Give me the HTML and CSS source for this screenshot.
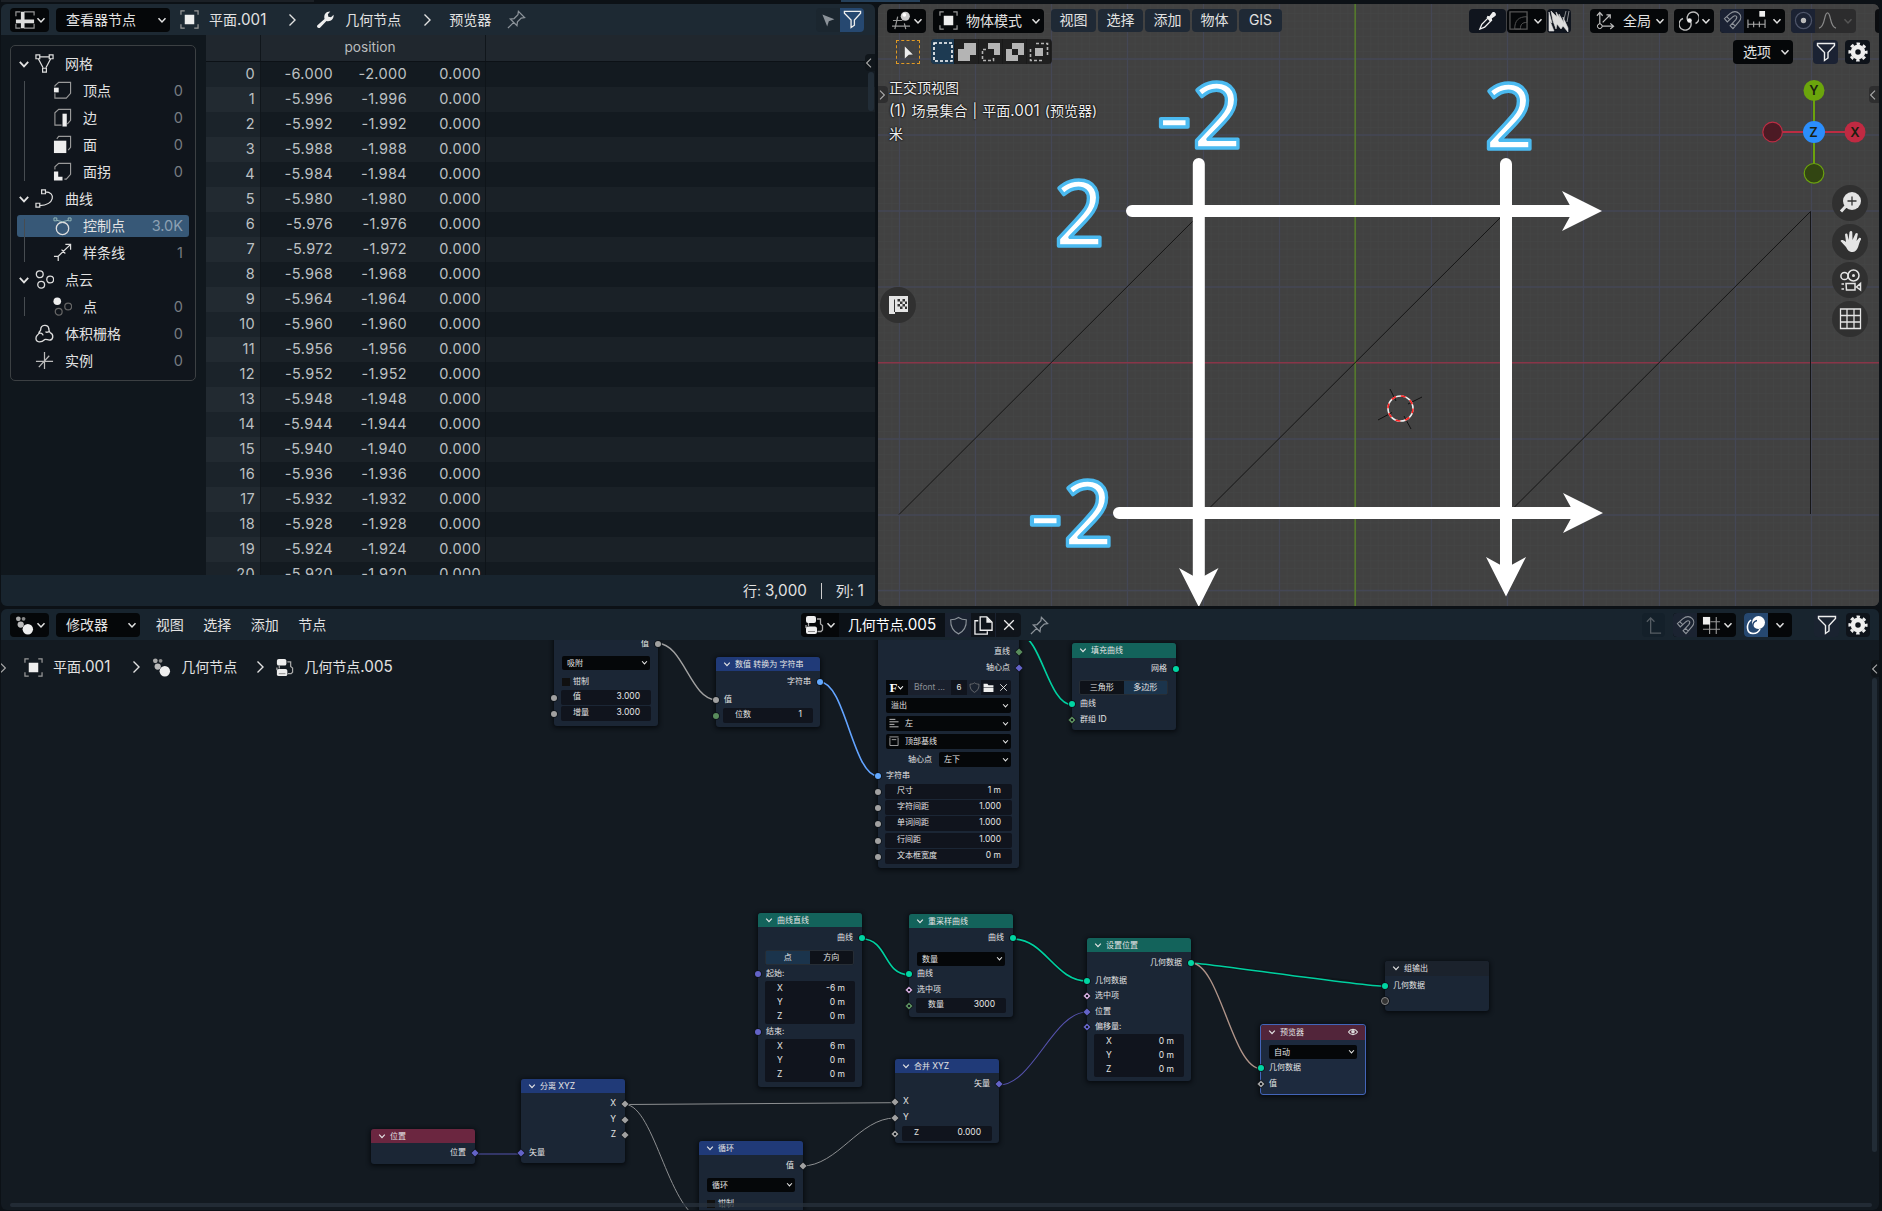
FILE: index.html
```html
<!DOCTYPE html>
<html lang="zh-CN">
<head>
<meta charset="utf-8">
<title>几何节点.005</title>
<link rel="stylesheet" href="styles.css">
</head>
<body>
<svg class="defs" aria-hidden="true">
  <symbol id="chev" viewBox="0 0 10 10"><path d="M1.5 3.2 5 7 8.5 3.2" fill="none" stroke="currentColor" stroke-width="1.5"/></symbol>
  <symbol id="right" viewBox="0 0 10 14"><path d="M2.5 1.5 8 7 2.5 12.5" fill="none" stroke="currentColor" stroke-width="1.4"/></symbol>
  <symbol id="object" viewBox="0 0 20 20"><path d="M1 5V1H5M15 1H19V5M19 15V19H15M5 19H1V15" fill="none" stroke="#999" stroke-width="1.3"/><rect x="5" y="5" width="10" height="10" fill="#eee"/></symbol>
  <symbol id="sheet" viewBox="0 0 22 20"><path d="M1 6V1H6M10 1H21V5M21 14V19H10M6 19H1V14" fill="none" stroke="#999" stroke-width="1.3"/><path d="M1 11.500H21M8.500 1V19" stroke="#ddd" stroke-width="4"/></symbol>
  <symbol id="wrench" viewBox="0 0 20 20"><path d="M1.500 16 9 9.500C8 5 10 1.500 15 1.500L12.500 4.500 13 7 15.800 7.500 18.500 5C19 10 15 12.500 11 11.500L4.500 18.500C3 20 0 18 1.500 16Z" fill="#eee"/></symbol>
  <symbol id="pin" viewBox="0 0 20 20"><path d="M1 19 7 13M3.500 9.500 10.500 16.500 11 12.500 15 8.500 18.500 8 12 1.500 11.500 5 7.500 9Z" fill="none" stroke="currentColor" stroke-width="1.3"/></symbol>
  <symbol id="cursor" viewBox="0 0 20 20"><path d="M3 3 18 9 11 11.500 9 18Z" fill="currentColor"/></symbol>
  <symbol id="tweak" viewBox="0 0 20 20"><path d="M6 3 16 13 11 13.500 6 18Z" fill="#eee"/></symbol>
  <symbol id="funnel" viewBox="0 0 20 20"><path d="M1.500 1.500H18.500V3.500L12 10.500V16L8.500 18.500V10.500L1.500 3.500Z" fill="none" stroke="#eee" stroke-width="1.4"/></symbol>
  <symbol id="gear" viewBox="0 0 20 20"><circle cx="10" cy="10" r="5" fill="none" stroke="#eee" stroke-width="4.500"/><circle cx="10" cy="10" r="8.300" fill="none" stroke="#eee" stroke-width="2.600" stroke-dasharray="3.400 3.120" stroke-dashoffset="1.700"/></symbol>
  <symbol id="mesh" viewBox="0 0 20 20"><g fill="none" stroke="#ddd" stroke-width="1.300"><path d="M5 3H15M3.500 5 8.500 14.500M16.500 5 11.500 14.500"/><path d="M1 1H5V5H1ZM15 1H19V5H15ZM8 15H12V19H8Z"/></g></symbol>
  <symbol id="vert" viewBox="0 0 20 20"><path d="M2 6V5L6 1.500H18.500V13L14 18H2V13" fill="none" stroke="#999" stroke-width="1.200"/><rect x="1" y="7" width="5" height="5" fill="#eee"/></symbol>
  <symbol id="edge" viewBox="0 0 20 20"><path d="M9 18H2V5L6 1.500H18.500V13L15 17" fill="none" stroke="#999" stroke-width="1.200"/><rect x="10" y="6" width="4.500" height="13.500" fill="#eee"/></symbol>
  <symbol id="face" viewBox="0 0 20 20"><path d="M4 4 6 1.500H18.500V13L16 16" fill="none" stroke="#999" stroke-width="1.200"/><rect x="1" y="6" width="13" height="13" fill="#eee"/></symbol>
  <symbol id="corner" viewBox="0 0 20 20"><path d="M2 8V5L6 1.500H18.500V13L14 18H12" fill="none" stroke="#999" stroke-width="1.200"/><path d="M1 10H5.500V15.500H10V19.500H1Z" fill="#eee"/></symbol>
  <symbol id="curve" viewBox="0 0 20 20"><g fill="none" stroke="#ddd" stroke-width="1.300"><path d="M7 1H11V5H7ZM1 15H5V19H1ZM11 3C22 3 21 17 5 17.500"/></g></symbol>
  <symbol id="ctrl" viewBox="0 0 20 20"><g fill="none" stroke="#ddd"><circle cx="10" cy="12" r="6.500" stroke-width="1.400"/><path d="M4 3.500 10 5 16 3.500" stroke="#9bb" /><path d="M1 1H4V4H1ZM16 1H19V4H16Z" stroke="#9bb"/></g></symbol>
  <symbol id="spline" viewBox="0 0 20 20"><path d="M1 14H5.500V19M5.500 14 18 2M13 1.500H18.500V7M9 7 13 11" fill="none" stroke="#ddd" stroke-width="1.300"/></symbol>
  <symbol id="cloud3" viewBox="0 0 20 20"><g fill="none" stroke="#ddd" stroke-width="1.400"><circle cx="5" cy="4.500" r="3.600"/><circle cx="16" cy="10" r="3.600"/><circle cx="6.500" cy="15.500" r="3.600"/></g></symbol>
  <symbol id="pt3" viewBox="0 0 20 20"><circle cx="4.500" cy="4.500" r="4" fill="#eee"/><g fill="none" stroke="#666" stroke-width="1.300"><circle cx="16" cy="10" r="3.600"/><circle cx="6" cy="15.500" r="3.600"/></g></symbol>
  <symbol id="volume" viewBox="0 0 20 20"><path d="M4 10C4 8 6 7.500 6 6 6 0 14 0 14.500 5 15 7 14.500 8 16 9 20 11 19.500 17 15 17 13 17 12 15.500 10 16.500 7 19.500 1 20 1 15 1 12 3 12 4 10ZM4 10C6 9 8 10 8.500 12M14.500 8C13 9 12 9 11 8" fill="none" stroke="#ddd" stroke-width="1.400"/></symbol>
  <symbol id="axes" viewBox="0 0 20 20"><path d="M10 1V19M1 11H19M4 17 15 5" fill="none" stroke="#bbb" stroke-width="1.300"/></symbol>
  <symbol id="nodes" viewBox="0 0 20 20"><circle cx="3.500" cy="3" r="2.500" fill="#aaa"/><circle cx="9" cy="3" r="2" fill="#888"/><circle cx="6" cy="9" r="3.300" fill="#bbb"/><circle cx="13.500" cy="14" r="5.500" fill="#eee"/></symbol>
  <symbol id="tree" viewBox="0 0 20 20"><rect x="2" y="1" width="10" height="7" rx="2" fill="#eee"/><path d="M2 10V13M13 4H16.500V9L18.500 10.500V15L17 16.500H13.500M4.500 8V11" fill="none" stroke="#aaa" stroke-width="1.300"/><rect x="2" y="11.500" width="11" height="7.500" rx="2" fill="#eee"/><path d="M4 16.500H11" stroke="#888"/></symbol>
  <symbol id="view3d" viewBox="0 0 20 20"><path d="M1 10H11M0 16H19M6 6 3 19M13 13 14.500 19" fill="none" stroke="#999" stroke-width="1.300"/><circle cx="14" cy="5.500" r="4.800" fill="#ccc"/><circle cx="13" cy="4" r="2" fill="#fff"/></symbol>
  <symbol id="shield" viewBox="0 0 20 20"><path d="M10 1.500C7.500 3.300 5 4 1.800 4 1.500 11 4 16 10 18.800 16 16 18.500 11 18.200 4 15 4 12.500 3.300 10 1.500Z" fill="none" stroke="currentColor" stroke-width="1.200"/></symbol>
  <symbol id="copy" viewBox="0 0 20 20"><path d="M4.500 5H1V19H14V16M6.500 1H13.500L19 6.500V15H6.500Z" fill="none" stroke="#eee" stroke-width="1.400"/><path d="M13 1V7H19Z" fill="#eee"/></symbol>
  <symbol id="cross" viewBox="0 0 20 20"><path d="M4 4 16 16M16 4 4 16" stroke="#eee" stroke-width="1.600"/></symbol>
  <symbol id="up" viewBox="0 0 20 20"><path d="M3 6 7 2 11 6M7 2V18H18" fill="none" stroke="#555c63" stroke-width="1.400"/></symbol>
  <symbol id="magnet" viewBox="0 0 20 20"><path d="M1.500 8 7 3C15 -3 22 5 17 11L10.500 18.500 7.500 15.500 13.500 9C16 5.500 13 4 10.500 6L4.500 11.500ZM4 6 7 9M10 13 13 16" fill="none" stroke="#8f949b" stroke-width="1.200"/></symbol>
  <symbol id="grid" viewBox="0 0 20 20"><path d="M8 1V19M15 1V19M1 14H19M9 6H19" stroke="#999" stroke-width="1.200"/><rect x="1" y="1" width="7.500" height="8" fill="#eee"/></symbol>
  <symbol id="overlay" viewBox="0 0 20 20"><circle cx="12.500" cy="7.500" r="6.500" fill="#fff"/><path d="M5 5C0 9 0 18 7 18.500 11 18.500 13 16.500 14 14" fill="none" stroke="#fff" stroke-width="1.600"/><path d="M7 13C6 9 8 6 11 5.500" fill="none" stroke="#264770" stroke-width="1.500"/></symbol>
  <symbol id="dropper" viewBox="0 0 20 20"><path d="M2 19 4 14 11 7 14 10 7 17Z" fill="none" stroke="#eee" stroke-width="1.400"/><path d="M10 5 12 5.500 15 1.500C17 0 20 3 18.500 5L14.500 8 15 10 12.500 11 9 7Z" fill="#eee"/></symbol>
  <symbol id="bevel" viewBox="0 0 20 20"><path d="M1 1H19V19H1Z" fill="none" stroke="#555" stroke-width="1.400"/><path d="M6 19C6 10 10 6 19 6V12C14 12 12 14 12 19Z" fill="none" stroke="#555"/></symbol>
  <symbol id="orient" viewBox="0 0 20 20"><path d="M4 2V16H18M1 5 4 1.500 7 5M15 13 18.500 16 15 19M7 12 15 4M11 4H15V8" fill="none" stroke="#bbb" stroke-width="1.300"/><circle cx="4" cy="16" r="2.500" fill="#000" stroke="#ddd"/></symbol>
  <symbol id="pivot" viewBox="0 0 20 20"><g fill="none" stroke="#bbb" stroke-width="1.400"><path d="M9 10A6 6 0 1 1 16.500 12.500M11.500 10.500A6 6 0 1 1 4 7.500"/></g><circle cx="10.500" cy="9.500" r="2.300" fill="#eee"/></symbol>
  <symbol id="incr" viewBox="0 0 20 20"><path d="M1 9V18M7 11V17M13 11V17M19 9V18M1 14H19" stroke="#aaa" stroke-width="1.200"/><rect x="13" y="0" width="6" height="6" fill="#eee"/></symbol>
  <symbol id="prop" viewBox="0 0 20 20"><circle cx="10" cy="10" r="8.500" fill="none" stroke="#4d5468" stroke-width="1.300"/><circle cx="10" cy="10" r="2.800" fill="#bbb"/></symbol>
  <symbol id="bell" viewBox="0 0 20 20"><path d="M1 18C8 17 6 2 10 2 14 2 12 17 19 18" fill="none" stroke="#888" stroke-width="1.300"/></symbol>
  <symbol id="folder" viewBox="0 0 20 20"><path d="M1 3H8L10 6H19V9H1ZM1 10H19V18H1Z" fill="#eee"/></symbol>
  <symbol id="eye" viewBox="0 0 20 20"><path d="M1 10C5 3 15 3 19 10 15 17 5 17 1 10Z" fill="none" stroke="#ddd" stroke-width="2.200"/><circle cx="10" cy="9.500" r="3.600" fill="#ddd"/></symbol>
</svg>

<div class="app">
  <div class="strip"><i class="s1"></i><i class="s2"></i></div>
  <div class="upper">
    <section class="sheet area">
      <header class="bar">
        <div class="btn black ed"><svg class="i20"><use href="#sheet"/></svg><svg class="cv"><use href="#chev"/></svg></div>
        <div class="btn black dd1"><span>查看器节点</span><svg class="cv"><use href="#chev"/></svg></div>
        <div class="crumbs">
          <svg class="i19"><use href="#object"/></svg><span>平面<b>.001</b></span>
          <svg class="rt"><use href="#right"/></svg>
          <svg class="i19"><use href="#wrench"/></svg><span>几何节点</span>
          <svg class="rt"><use href="#right"/></svg><span class="last">预览器</span>
          <svg class="i19 dim"><use href="#pin"/></svg>
        </div>
        <div class="btn filt"><span class="half"><svg class="i16 dim"><use href="#cursor"/></svg></span><span class="half on"><svg class="i19"><use href="#funnel"/></svg></span></div>
      </header>
      <div class="sheetbody">
        <aside>
          <div class="treebox">
            <div class="ti"><svg class="tcv"><use href="#chev"/></svg><svg class="i19"><use href="#mesh"/></svg><span>网格</span></div>
            <div class="kids">
              <div class="ti sub"><svg class="i19"><use href="#vert"/></svg><span>顶点</span><em>0</em></div>
              <div class="ti sub"><svg class="i19"><use href="#edge"/></svg><span>边</span><em>0</em></div>
              <div class="ti sub"><svg class="i19"><use href="#face"/></svg><span>面</span><em>0</em></div>
              <div class="ti sub"><svg class="i19"><use href="#corner"/></svg><span>面拐</span><em>0</em></div>
            </div>
            <div class="ti"><svg class="tcv"><use href="#chev"/></svg><svg class="i19"><use href="#curve"/></svg><span>曲线</span></div>
            <div class="kids">
              <div class="ti sub sel"><svg class="i19"><use href="#ctrl"/></svg><span>控制点</span><em>3.0K</em></div>
              <div class="ti sub"><svg class="i19"><use href="#spline"/></svg><span>样条线</span><em>1</em></div>
            </div>
            <div class="ti"><svg class="tcv"><use href="#chev"/></svg><svg class="i19"><use href="#cloud3"/></svg><span>点云</span></div>
            <div class="kids">
              <div class="ti sub"><svg class="i19"><use href="#pt3"/></svg><span>点</span><em>0</em></div>
            </div>
            <div class="ti leaf"><svg class="i19"><use href="#volume"/></svg><span>体积栅格</span><em>0</em></div>
            <div class="ti leaf"><svg class="i19"><use href="#axes"/></svg><span>实例</span><em>0</em></div>
          </div>
        </aside>
        <div class="table">
          <div class="th"><span></span><span>position</span><span></span></div>
          <div class="rows">
            <div class="tr"><b>0</b><i>-6.000</i><i>-2.000</i><i>0.000</i></div>
            <div class="tr"><b>1</b><i>-5.996</i><i>-1.996</i><i>0.000</i></div>
            <div class="tr"><b>2</b><i>-5.992</i><i>-1.992</i><i>0.000</i></div>
            <div class="tr"><b>3</b><i>-5.988</i><i>-1.988</i><i>0.000</i></div>
            <div class="tr"><b>4</b><i>-5.984</i><i>-1.984</i><i>0.000</i></div>
            <div class="tr"><b>5</b><i>-5.980</i><i>-1.980</i><i>0.000</i></div>
            <div class="tr"><b>6</b><i>-5.976</i><i>-1.976</i><i>0.000</i></div>
            <div class="tr"><b>7</b><i>-5.972</i><i>-1.972</i><i>0.000</i></div>
            <div class="tr"><b>8</b><i>-5.968</i><i>-1.968</i><i>0.000</i></div>
            <div class="tr"><b>9</b><i>-5.964</i><i>-1.964</i><i>0.000</i></div>
            <div class="tr"><b>10</b><i>-5.960</i><i>-1.960</i><i>0.000</i></div>
            <div class="tr"><b>11</b><i>-5.956</i><i>-1.956</i><i>0.000</i></div>
            <div class="tr"><b>12</b><i>-5.952</i><i>-1.952</i><i>0.000</i></div>
            <div class="tr"><b>13</b><i>-5.948</i><i>-1.948</i><i>0.000</i></div>
            <div class="tr"><b>14</b><i>-5.944</i><i>-1.944</i><i>0.000</i></div>
            <div class="tr"><b>15</b><i>-5.940</i><i>-1.940</i><i>0.000</i></div>
            <div class="tr"><b>16</b><i>-5.936</i><i>-1.936</i><i>0.000</i></div>
            <div class="tr"><b>17</b><i>-5.932</i><i>-1.932</i><i>0.000</i></div>
            <div class="tr"><b>18</b><i>-5.928</i><i>-1.928</i><i>0.000</i></div>
            <div class="tr"><b>19</b><i>-5.924</i><i>-1.924</i><i>0.000</i></div>
            <div class="tr"><b>20</b><i>-5.920</i><i>-1.920</i><i>0.000</i></div>
          </div>
        </div>
        <div class="tab tab-sheet"><svg class="lt"><use href="#right"/></svg></div>
        <div class="scroll-sheet"></div>
      </div>
      <footer>行: <b>3,000</b><u></u>列: <b>1</b></footer>
    </section>

    <section class="view area">
      <svg class="scene" viewBox="878 4 1001 602" width="1001" height="602">
        <defs>
          <pattern id="fine" x="899" y="58.700" width="7.600" height="7.600" patternUnits="userSpaceOnUse"><path d="M0 .5H7.600M.5 0V7.600" stroke="#434445" stroke-width=".6"/></pattern>
        </defs>
        <rect x="878" y="4" width="1001" height="602" fill="#414141"/>
        <rect x="878" y="4" width="1001" height="602" fill="url(#fine)"/>
        <path d="M899.500 4V606M975.500 4V606M1051.500 4V606M1127.500 4V606M1203.500 4V606M1279.500 4V606M1431.500 4V606M1507.500 4V606M1583.500 4V606M1659.500 4V606M1735.500 4V606M1811.500 4V606M878 59H1879M878 135H1879M878 211H1879M878 287H1879M878 439H1879M878 515H1879M878 590.500H1879" stroke="#444755" stroke-width="1.300" fill="none"/>
        <path d="M878 362.700H1879" stroke="#893548" stroke-width="1.600"/>
        <path d="M1355.200 4V606" stroke="#55782d" stroke-width="1.700"/>
        <path d="M899 514.500 1203 211M1203 514.500 1507 211M1507 514.500 1810.500 211.500V514" stroke="#161616" stroke-width="1" fill="none"/>
        <g stroke="#fff" stroke-width="12" stroke-linecap="round">
          <path d="M1132 211H1572M1119 513H1574M1198.800 164V578M1506 164V567"/>
        </g>
        <g fill="#fff">
          <path d="M1602 211 1562 191 1573 211 1562 231ZM1603 513 1563 493 1574 513 1563 533ZM1198.800 607 1179 568 1198.800 579 1218.500 568ZM1506 596.500 1486 557 1506 568 1526 557Z"/>
        </g>
        <g class="num">
          <text transform="translate(1157 146.500) scale(1.180 1)">-</text><text transform="translate(1192.500 148) scale(.95 1)">2</text>
          <text transform="translate(1484.500 149) scale(.95 1)">2</text>
          <text transform="translate(1054.500 246) scale(.95 1)">2</text>
          <text transform="translate(1028 544.500) scale(1.180 1)">-</text><text transform="translate(1063.500 546) scale(.95 1)">2</text>
        </g>
        <g fill="none"><path d="M1378 420 1392 412.500M1408 404 1422 397M1390 389 1396 401M1404 416 1411 429" stroke="#111"/><circle cx="1400.500" cy="408.500" r="12.500" stroke="#eee" stroke-width="1.600"/><circle cx="1400.500" cy="408.500" r="12.500" stroke="#f22" stroke-width="1.600" stroke-dasharray="4.900 4.917"/></g>
        <g stroke-width="2"><path d="M1772 132H1855" stroke="#bb2c43"/><path d="M1814 90V173" stroke="#6ba30d"/></g>
        <circle cx="1814" cy="90.500" r="10.500" fill="#6ba50c"/><circle cx="1855" cy="132" r="10.500" fill="#c02a42"/>
        <circle cx="1814" cy="132" r="11" fill="#2b8efc"/>
        <circle cx="1772.600" cy="132" r="9.800" fill="#4c1a24" stroke="#bb2c43" stroke-width="1.200"/><circle cx="1814" cy="173.300" r="9.800" fill="#324512" stroke="#6ba30d" stroke-width="1.200"/>
        <g class="axis"><text x="1814" y="95">Y</text><text x="1855" y="137">X</text><text x="1813.500" y="137">Z</text></g>
        <g fill="#303030"><circle cx="1850" cy="203" r="18"/><circle cx="1850" cy="242" r="18"/><circle cx="1850" cy="280" r="18"/><circle cx="1850" cy="319" r="18"/><circle cx="898" cy="305" r="18"/></g>
        <g fill="#e4e4e4">
          <circle cx="1852" cy="201" r="9"/><path d="M1841 211.500 1846 206" stroke="#e4e4e4" stroke-width="3"/><path d="M1847.500 201H1856.500M1852 196.500V205.500" stroke="#333" stroke-width="1.300"/>
          <path d="M1846 247 1840.500 241C1841 239.500 1843 239.500 1846 242L1845 234.500C1845.500 233 1847.300 233.500 1847.500 234.500L1848.500 240 1849.500 232C1850.500 230.500 1852.300 231 1852.300 232.500L1852.500 240 1855.500 233.500C1856.500 232.500 1858 233 1857.800 234.500L1856.500 241 1859 238C1860.500 237.500 1861.500 238.500 1861 239.500 1858.500 243 1858.500 251.500 1853 252 1849 252 1847.500 250 1846 247Z"/>
          <g fill="none" stroke="#e4e4e4" stroke-width="1.500"><circle cx="1844.500" cy="276" r="3.600"/><circle cx="1853.500" cy="275.500" r="5.500"/><path d="M1846 283.500H1855V290H1846.500ZM1841.500 284H1844M1841.500 289H1844M1860.500 283.500V290L1856.500 287Z"/></g><circle cx="1853.500" cy="275.500" r="1.500"/>
          <path d="M1840.500 309H1860.500V328.500H1840.500ZM1847 309V328.500M1854 309V328.500M1840.500 315.500H1860.500M1840.500 322H1860.500" fill="none" stroke="#e4e4e4" stroke-width="1.300"/>
          <path d="M889 296H908V312H895V314H889Z"/><path d="M894.500 299.500V312" stroke="#333" stroke-width="1"/><path d="M897.500 299H900V301.500H897.500ZM902.500 299H905V301.500H902.500ZM900 301.500H902.500V304H900ZM905 301.500H907V304H905ZM897.500 304H900V306.500H897.500ZM902.500 304H905V306.500H902.500ZM900 306.500H902.500V309H900ZM905 306.500H907V309H905Z" fill="#333"/>
        </g>
      </svg>
      <header class="vbar">
        <div class="btn black ed"><svg class="i19"><use href="#view3d"/></svg><svg class="cv"><use href="#chev"/></svg></div>
        <div class="btn black mode"><svg class="i19"><use href="#object"/></svg><span>物体模式</span><svg class="cv"><use href="#chev"/></svg></div>
        <nav><a>视图</a><a>选择</a><a>添加</a><a>物体</a><a class="gis">GIS</a></nav>
        <div class="tools">
          <div class="btn t1"><svg class="i19"><use href="#dropper"/></svg></div>
          <div class="btn black t2"><svg class="i19"><use href="#bevel"/></svg><svg class="cv"><use href="#chev"/></svg></div>
          <div class="btn t3"><svg viewBox="0 0 22 24" width="22" height="24"><path d="M1 3 4 14 2 12 6 22 1 22ZM3 2 9 8 8 3 12 9 11 5 16 14 15 8 20 19V23L15 17 13 20 9 15 8 20 5 12ZM18 2 16 10M21 2 19 13" fill="#ddd" stroke="#ddd" stroke-width=".6"/></svg></div>
          <div class="btn black t4"><svg class="i19"><use href="#orient"/></svg><span>全局</span><svg class="cv"><use href="#chev"/></svg></div>
          <div class="btn black t5"><svg class="i20"><use href="#pivot"/></svg><svg class="cv"><use href="#chev"/></svg></div>
          <div class="btn black t6"><span class="half navy"><svg class="i19"><use href="#magnet"/></svg></span><svg class="i19"><use href="#incr"/></svg><svg class="cv"><use href="#chev"/></svg></div>
          <div class="btn t7"><span class="half navy"><svg class="i19"><use href="#prop"/></svg></span><svg class="i19"><use href="#bell"/></svg><svg class="cv dim2"><use href="#chev"/></svg></div>
          <div class="t8"></div>
        </div>
      </header>
      <div class="vbar2">
        <div class="tweak"><svg class="i16"><use href="#tweak"/></svg></div>
        <div class="seltools">
          <span class="on"><svg viewBox="0 0 20 20"><path d="M1 1H19V19H1Z" fill="none" stroke="#fff" stroke-width="1.600" stroke-dasharray="3 2"/></svg></span>
          <span><svg viewBox="0 0 20 20"><path d="M7 1H19V13H13V19H1V7H7Z" fill="#b4b4b4"/></svg></span>
          <span><svg viewBox="0 0 20 20"><path d="M7 1H19V13H13V7H7Z" fill="#b4b4b4"/><path d="M5 7.500H1.500V18.500H12.500V15" fill="none" stroke="#b4b4b4" stroke-width="1.600" stroke-dasharray="3 2"/></svg></span>
          <span><svg viewBox="0 0 20 20"><path fill-rule="evenodd" d="M7 1H19V13H13V19H1V7H7ZM7 7V13H13V7Z" fill="#b4b4b4"/></svg></span>
          <span><svg viewBox="0 0 20 20"><rect x="6" y="6" width="8" height="8" fill="#b4b4b4"/><path d="M7 1.500H18.500V13M13 18.500H1.500V7" fill="none" stroke="#b4b4b4" stroke-width="1.600" stroke-dasharray="3 2"/></svg></span>
        </div>
        <div class="btn black opt"><span>选项</span><svg class="cv"><use href="#chev"/></svg></div>
        <div class="btn sq navy o1"><svg class="i20"><use href="#funnel"/></svg></div>
        <div class="btn sq ink o2"><svg class="i20"><use href="#gear"/></svg></div>
      </div>
      <div class="info"><p>正交顶视图</p><p><b>(1)</b> 场景集合 | 平面<b>.001</b> (预览器)</p><p>米</p></div>
      <div class="tab tab-vl"><svg class="rt2"><use href="#right"/></svg></div>
      <div class="tab tab-vr"><svg class="lt"><use href="#right"/></svg></div>
    </section>
  </div>

  <section class="editor area">
    <header class="bar nbar">
      <div class="btn black ed"><svg class="i19"><use href="#nodes"/></svg><svg class="cv"><use href="#chev"/></svg></div>
      <div class="btn black dd2"><span>修改器</span><svg class="cv"><use href="#chev"/></svg></div>
      <nav class="plain"><a>视图</a><a>选择</a><a>添加</a><a>节点</a></nav>
      <div class="idblock">
        <div class="c1"><svg class="i20"><use href="#tree"/></svg><svg class="cv"><use href="#chev"/></svg></div>
        <div class="c2">几何节点<b>.005</b></div>
        <div class="c3 dim"><svg class="i19"><use href="#shield"/></svg></div>
        <div class="c4"><svg class="i19"><use href="#copy"/></svg></div>
        <div class="c5"><svg class="i16"><use href="#cross"/></svg></div>
      </div>
      <svg class="i19 dim npin"><use href="#pin"/></svg>
      <div class="ntools">
        <div class="btn n1"><svg class="i19"><use href="#up"/></svg></div>
        <div class="btn black n2"><span class="half ink2"><svg class="i19"><use href="#magnet"/></svg></span><svg class="i19"><use href="#grid"/></svg><svg class="cv"><use href="#chev"/></svg></div>
        <div class="btn black n3"><span class="half on"><svg class="i20"><use href="#overlay"/></svg></span><svg class="cv"><use href="#chev"/></svg></div>
        <div class="btn n4"><svg class="i20"><use href="#funnel"/></svg></div>
        <div class="btn ink n5"><svg class="i20"><use href="#gear"/></svg></div>
      </div>
    </header>
    <div class="canvas">
      <svg class="links" viewBox="1 640 1878 570" width="1878" height="570" fill="none">
        <path d="M862 938C890 938 882 974 909 974M1013 938C1045 938 1055 980 1087 980M1191 962 1385 985" stroke="#0a0f14" stroke-width="3.500" opacity=".5"/>
        <path d="M658 642.500C683 642.500 691 698.700 716 698.700" stroke="#a1a1a1" stroke-width="1.400"/>
        <path d="M820 681C845 681 853 775 878 775" stroke="#63a4ff" stroke-width="1.600"/>
        <path d="M1019 634C1041 634 1048 703.700 1072 703.700M862 938C888 938 883 973.700 909 973.700M1013 938C1045 938 1055 980 1087 980M1191 962C1206 962 1360 985 1385 985.300" stroke="#00d0a0" stroke-width="1.700"/>
        <path d="M1191 962C1220 962 1232 1067.700 1261 1067.700" stroke="#b09489" stroke-width="1.400"/>
        <path d="M999 1084C1033 1084 1053 1011 1087 1011M474 1153H521" stroke="#5552ad" stroke-width="1.100"/>
        <path d="M625 1103.500 895 1101.700M625 1103.500C655 1103.500 670 1219 706 1219M802 1165C838 1165 859 1117 895 1117" stroke="#8d8f91" stroke-width="1"/>
      </svg>

      <div class="node nA"><div class="r out mt7">值<i class="s g"></i></div><div class="dd sm mt5">吸附<svg><use href="#chev"/></svg></div><div class="r ck mt4"><u></u>钳制</div><div class="f mt1"><i class="s g"></i>值<b>3.000</b></div><div class="f mt1"><i class="s g"></i>增量<b>3.000</b></div></div>

      <div class="node nB"><h4 class="blue"><svg><use href="#chev"/></svg>数值 转换为 字符串</h4><div class="r out mt3">字符串<i class="s sky"></i></div><div class="r mt3"><i class="s g"></i>值</div><div class="f mt1"><i class="s grn"></i>位数<b>1</b></div></div>

      <div class="node nC"><div class="r out mt24">直线<i class="s d grn"></i></div><div class="r out mt1">轴心点<i class="s d pur"></i></div>
        <div class="fontrow mt5"><span class="fa">F<svg><use href="#chev"/></svg></span><span class="fb">Bfont ...</span><span class="fc">6</span><span class="fd"><svg><use href="#shield"/></svg></span><span class="fe"><svg><use href="#folder"/></svg></span><span class="ff"><svg><use href="#cross"/></svg></span></div>
        <div class="dd mt3">溢出<svg><use href="#chev"/></svg></div>
        <div class="dd mt3"><svg class="al" viewBox="0 0 11 11"><path d="M.5 1.500H7M.5 4.200H10.500M.5 7H6M.5 9.700H10.500" stroke="#ccc"/></svg>左<svg><use href="#chev"/></svg></div>
        <div class="dd mt3"><svg class="al" viewBox="0 0 11 11"><path d="M.5 1H10.500M1 2V10.500H10V2M3 4H8" fill="none" stroke="#aaa"/></svg>顶部基线<svg><use href="#chev"/></svg></div>
        <div class="split mt3"><span>轴心点</span><div class="dd">左下<svg><use href="#chev"/></svg></div></div>
        <div class="r mt1"><i class="s sky"></i>字符串</div>
        <div class="f mt1"><i class="s g"></i>尺寸<b>1 m</b></div><div class="f mt1"><i class="s g"></i>字符间距<b>1.000</b></div><div class="f mt1"><i class="s g"></i>单词间距<b>1.000</b></div><div class="f mt2"><i class="s g"></i>行间距<b>1.000</b></div><div class="f mt1"><i class="s g"></i>文本框宽度<b>0 m</b></div></div>

      <div class="node nD"><h4 class="teal"><svg><use href="#chev"/></svg>填充曲线</h4><div class="r out mt3">网格<i class="s t"></i></div><div class="seg mt4"><span>三角形</span><span class="on">多边形</span></div><div class="r mt1"><i class="s t"></i>曲线</div><div class="r mt1"><i class="s h grn"></i>群组&nbsp;<b>ID</b></div></div>

      <div class="node nE"><h4 class="teal"><svg><use href="#chev"/></svg>曲线直线</h4><div class="r out mt3">曲线<i class="s t"></i></div><div class="seg mt5"><span class="on">点</span><span>方向</span></div><div class="r mt1"><i class="s pur"></i>起始:</div><div class="xyz"><p>X<b>-6 m</b></p><p>Y<b>0 m</b></p><p>Z<b>0 m</b></p></div><div class="r"><i class="s pur"></i>结束:</div><div class="xyz"><p>X<b>6 m</b></p><p>Y<b>0 m</b></p><p>Z<b>0 m</b></p></div></div>

      <div class="node nF"><h4 class="teal"><svg><use href="#chev"/></svg>重采样曲线</h4><div class="r out mt2">曲线<i class="s t"></i></div><div class="dd sm mt7">数量<svg><use href="#chev"/></svg></div><div class="r"><i class="s t"></i>曲线</div><div class="r mt1"><i class="s h pink"></i>选中项</div><div class="f mt1"><i class="s h grn"></i>数量<b>3000</b></div></div>

      <div class="node nG"><h4 class="teal"><svg><use href="#chev"/></svg>设置位置</h4><div class="r out mt3">几何数据<i class="s t"></i></div><div class="r mt3"><i class="s t"></i>几何数据</div><div class="r"><i class="s h pink"></i>选中项</div><div class="r mt1"><i class="s d pur"></i>位置</div><div class="r"><i class="s h pur"></i>偏移量:</div><div class="xyz"><p>X<b>0 m</b></p><p>Y<b>0 m</b></p><p>Z<b>0 m</b></p></div></div>

      <div class="node nH"><h4 class="slate"><svg><use href="#chev"/></svg>组输出</h4><div class="r mt2"><i class="s t"></i>几何数据</div><div class="r"><i class="s ring"></i></div></div>

      <div class="node nI"><h4 class="wine"><svg><use href="#chev"/></svg>预览器<svg class="eye"><use href="#eye"/></svg></h4><div class="dd sm mt5">自动<svg><use href="#chev"/></svg></div><div class="r mt1"><i class="s t"></i>几何数据</div><div class="r mt1"><i class="s h g"></i>值</div></div>

      <div class="node nJ"><h4 class="red"><svg><use href="#chev"/></svg>位置</h4><div class="r out mt2">位置<i class="s d pur"></i></div></div>

      <div class="node nK"><h4 class="blue"><svg><use href="#chev"/></svg>分离&nbsp;<b>XYZ</b></h4><div class="r out mt3"><b>X</b><i class="s d g"></i></div><div class="r out mt1"><b>Y</b><i class="s d g"></i></div><div class="r out"><b>Z</b><i class="s d g"></i></div><div class="r mt3"><i class="s d pur"></i>矢量</div></div>

      <div class="node nL"><h4 class="blue"><svg><use href="#chev"/></svg>合并&nbsp;<b>XYZ</b></h4><div class="r out mt3">矢量<i class="s d pur"></i></div><div class="r mt3"><i class="s d g"></i><b>X</b></div><div class="r mt1"><i class="s d g"></i><b>Y</b></div><div class="f mt1"><i class="s h g"></i>Z<b>0.000</b></div></div>

      <div class="node nM"><h4 class="blue"><svg><use href="#chev"/></svg>循环</h4><div class="r out mt3">值<i class="s d g"></i></div><div class="dd sm mt5">循环<svg><use href="#chev"/></svg></div><div class="r ck mt4"><u></u>钳制</div></div>

      <div class="path"><svg class="i19"><use href="#object"/></svg><span>平面<b>.001</b></span><svg class="rt"><use href="#right"/></svg><svg class="i19"><use href="#nodes"/></svg><span>几何节点</span><svg class="rt"><use href="#right"/></svg><svg class="i19"><use href="#tree"/></svg><span>几何节点<b>.005</b></span></div>
      <div class="tab tab-nl"><svg class="rt2"><use href="#right"/></svg></div>
      <div class="tab tab-nr"><svg class="lt"><use href="#right"/></svg></div>
      <div class="vscroll"></div><div class="hscroll"></div>
    </div>
  </section>
</div>
</body>
</html>
```
FILE: styles.css
```css
* { box-sizing: border-box; margin: 0; padding: 0; }
body { width: 1882px; height: 1211px; overflow: hidden; background: #0c1116; color: #e2e2e2; font: 14px/20px Inter, "Noto Sans CJK SC", sans-serif; }
b, i, em, u { font-weight: 400; font-style: normal; text-decoration: none; }
svg { flex: none; display: block; }
.defs { position: absolute; width: 0; height: 0; }
.app { display: flex; flex-direction: column; height: 1211px; padding: 0 3px 1px 1px; }
.strip { height: 4px; display: flex; }
.strip i { height: 2px; }
.s1 { width: 313px; background: #1b2026; margin-right: 527px; }
.s2 { width: 79px; background: #25405a; }
.upper { display: flex; gap: 3px; height: 602px; margin-bottom: 3px; }
.area { border-radius: 6px; overflow: hidden; position: relative; }
.sheet { width: 874px; display: flex; flex-direction: column; background: #131a20; }
.view { width: 1001px; background: #414141; }
.editor { flex: 1; display: flex; flex-direction: column; background: #131a21; }

.bar { height: 31px; background: #1d2933; display: flex; align-items: center; padding-left: 9px; flex: none; }
.nbar { background: #18242e; padding-top: 1px; }
.bar b, .path b, .info b, footer b { font-size: 15.2px; line-height: 1; }
.btn { height: 24px; border-radius: 4px; display: flex; align-items: center; }
.black { background: #050709; }
.i20 { width: 20px; height: 20px; }
.i19 { width: 19px; height: 19px; }
.i16 { width: 16px; height: 16px; }
.cv { width: 10px; height: 10px; margin-left: auto; }
.dim { color: #8b9299; }
.dim2 { color: #555; }
.ed { width: 39px; padding: 0 3px 0 5px; }
.dd1 { width: 114px; margin-left: 7px; padding: 0 3px 0 10px; }
.dd2 { width: 84px; margin-left: 7px; padding: 0 3px 0 10px; }
.crumbs { display: flex; align-items: center; margin-left: 10px; }
.crumbs span { margin-left: 10px; }
.crumbs .rt { width: 10px; height: 14px; margin: 0 19px 0 21px; }
.crumbs .last { margin-left: -2px; }
.crumbs .dim { margin-left: 16px; }
.filt { margin-left: auto; margin-right: 11px; width: 48px; overflow: hidden; background: #1b262f; }
.half { width: 24px; height: 24px; display: flex; align-items: center; justify-content: center; flex: none; }
.half.on { background: #264870; }

.sheetbody { height: 540px; display: flex; position: relative; overflow: hidden; }
aside { width: 205px; background: #10171d; padding: 10px 0 0 9px; }
.treebox { width: 186px; height: 336px; border: 1px solid #3c4043; border-radius: 5px; background: #10151c; padding-top: 4px; }
.ti { height: 27px; display: flex; align-items: center; padding: 0 13px 0 8px; }
.ti .tcv { width: 12px; height: 12px; margin: 0 5px 0 -1px; }
.ti span { margin-left: 11px; }
.ti em { margin-left: auto; color: #777c82; font-size: 14.5px; margin-right: -1px; }
.sub { padding-left: 42px; position: relative; }
.kids { position: relative; }
.kids::after { content: ""; position: absolute; left: 13px; top: 4px; bottom: 4px; width: 1px; background: #474c51; }
.leaf { padding-left: 24px; }
.sel { background: #375877; height: 22px; margin: 3px 6px 2px; border-radius: 3px; padding: 0 7px 0 36px; }
.sel em { color: #8ca0b3; }
.table { flex: 1; }
.th { display: grid; grid-template-columns: 55px 225px 1fr; height: 27px; background: #20272e; border-bottom: 1px solid #0c1116; }
.th span { text-align: center; line-height: 24px; color: #b9bcbe; border-right: 1px solid #10161b; font-size: 13.7px; padding-right: 6px; }
.th span:last-child { border: 0; }
.rows { height: 513px; overflow: hidden; }
.tr { display: grid; grid-template-columns: 55px 72px 74px 74px 5px 1fr; height: 25px; line-height: 23px; font-size: 14.5px; letter-spacing: .35px; color: #bcc0c3; background: linear-gradient(90deg, transparent 279px, #0e1419 279px 280px, transparent 280px) #131a20; }
.tr:nth-child(even) { background-color: #1a2127; }
.tr > * { text-align: right; }
.tr b { background: #1b232a; padding-right: 5px; border-right: 1px solid #10161b; }
.tr:nth-child(even) b { background: #222a31; }
footer { height: 31px; background: #18242e; display: flex; align-items: center; justify-content: flex-end; padding-right: 11px; white-space: pre; }
footer u { width: 1px; height: 16px; background: #ccc; margin: 0 14px; }

.scene { position: absolute; left: 0; top: 0; }
.num { font: 500 91px "Noto Sans", sans-serif; fill: #fff; stroke: #4bbaf0; stroke-width: 3.500px; stroke-linejoin: round; }
.axis { font: 600 13px Inter, sans-serif; text-anchor: middle; fill: #1a1f10; }
.vbar { position: relative; display: flex; align-items: center; height: 27px; padding: 4px 0 0 9px; margin-top: 1px; }
.mode { width: 111px; margin-left: 7px; padding: 0 3px 0 6px; }
.mode span { margin-left: 8px; }
nav { display: flex; gap: 2px; margin-left: 7px; }
nav a { width: 45px; height: 23px; line-height: 22px; text-align: center; background: #1f2935; border-radius: 4px; }
nav .gis { width: 43px; }
.plain { margin-left: 7px; }
.plain a { background: none; width: 45.5px; }
.tools { display: flex; margin-left: auto; }
.t1 { width: 37px; background: #10151e; justify-content: center; }
.t2 { width: 39px; margin-left: 1px; padding: 0 3px 0 2px; }
.t3 { width: 24px; margin-left: 1px; background: #10151e; justify-content: center; }
.t4 { width: 78px; margin-left: 19px; padding: 0 3px 0 6px; }
.t4 span { margin-left: 8px; }
.t5 { width: 40px; margin-left: 6px; padding: 0 3px 0 5px; }
.t6 { width: 65px; margin-left: 6px; padding-right: 3px; overflow: hidden; }
.t7 { width: 65px; margin-left: 6px; padding-right: 3px; background: #2c2c2d; overflow: hidden; }
.t6 .half, .t7 .half { margin-right: 3px; }
.t8 { width: 4px; height: 24px; margin-left: 19px; background: #0b0d10; border-radius: 4px 0 0 4px; }
.navy { background: #1b2233; }
.ink { background: #0e131a; }
.ink2 { background: #1b2331; }
.vbar2 { position: relative; display: flex; align-items: center; height: 25px; margin-top: 7px; padding-left: 18px; }
.tweak { width: 24px; height: 24px; border: 1.5px dashed #e09a24; display: flex; align-items: center; justify-content: center; }
.seltools { width: 121px; height: 25px; margin-left: 11px; background: #202020; border-radius: 4px; display: flex; overflow: hidden; }
.seltools span { width: 24px; display: flex; align-items: center; justify-content: center; border-right: 1px solid #1a1a1a; }
.seltools svg { width: 20px; height: 20px; }
.seltools .on { background: #1d3a52; }
.opt { width: 60px; margin-left: auto; padding: 0 3px 0 10px; }
.sq { width: 25px; justify-content: center; }
.o1 { margin-left: 20px; }
.o2 { margin: 0 9px 0 7px; }
.info { position: relative; margin: 12px 0 0 11px; text-shadow: 0 0 2px #000, 0 0 2px #000; color: #eee; }
.info p { line-height: 23px; white-space: pre; word-spacing: 1.2px; }

.tab { position: absolute; width: 10px; height: 17px; background: #2e2e2f; border-radius: 4px 0 0 4px; display: flex; align-items: center; color: #aaa; }
.tab svg { width: 8px; height: 12px; }
.lt { transform: scaleX(-1); }
.tab-sheet { right: 0; top: 19px; background: #10161b; }
.tab-vl { left: 0; top: 82px; border-radius: 0 4px 4px 0; }
.tab-vr { right: 0; top: 82px; }
.scroll-sheet { position: absolute; right: 1px; top: 37px; width: 6px; height: 39px; border-radius: 3px; background: #222d37; }

.idblock { display: flex; height: 24px; margin-left: 466px; border-radius: 4px; overflow: hidden; background: #0f141a; }
.idblock > div { display: flex; align-items: center; justify-content: center; }
.c1 { width: 38px; background: #050709; gap: 2px; }
.c1 .cv { margin: 0; }
.idblock .c2 { width: 106px; background: #0c1117; color: #fff; }
.c3 { width: 26px; background: #1a2230; }
.c4 { width: 25px; border-right: 1px solid #1a2230; }
.c5 { width: 25px; }
.npin { margin-left: 9px; }
.ntools { display: flex; margin-left: auto; }
.n1 { width: 23px; background: #14202a; justify-content: center; }
.n2 { width: 63px; margin-left: 8px; padding-right: 3px; overflow: hidden; }
.n2 .half { margin-right: 5px; }
.n3 { width: 48px; margin-left: 8px; padding-right: 7px; overflow: hidden; }
.n4 { width: 25px; margin-left: 22px; justify-content: center; background: #1a2330; }
.n5 { width: 24px; margin: 0 9px 0 7px; justify-content: center; }

.canvas { position: relative; height: 571px; overflow: hidden; }
.links { position: absolute; left: 0; top: 1px; }
.path { position: absolute; left: 23px; top: 17px; display: flex; align-items: center; }
.path span { margin-left: 10px; }
.path .rt { width: 10px; height: 14px; margin: 0 10px 0 18px; }
.path .rt:nth-of-type(2) { margin: 0 11px 0 21px; }
.tab-nl { left: -2px; top: 19px; background: none; }
.tab-nr { right: 0; top: 20px; background: #0f1419; width: 8px; }
.vscroll { position: absolute; right: 2px; top: 38px; width: 5px; height: 474px; border-radius: 3px; background: #222c36; }
.hscroll { position: absolute; left: 9px; right: 7px; bottom: 3px; height: 4px; border-radius: 2px; background: #28323c; opacity: .75; }

.node { position: absolute; width: 104px; background: #1b2635; border-radius: 3px; box-shadow: 0 1px 4px 1px #070b0f; font-size: 8px; line-height: 15px; color: #e4e4e4; white-space: nowrap; }
.node b { font-size: 8.5px; }
.node h4 { height: 14px; line-height: 12px; padding-bottom: 1px; font-size: 8px; font-weight: 400; display: flex; align-items: center; padding-left: 7px; border-radius: 3px 3px 0 0; }
.node h4 svg { width: 8px; height: 8px; margin-right: 4px; }
.node h4 .eye { width: 10px; height: 10px; margin-left: auto; margin-right: 7px; }
.blue { background: #203a78; }
.teal { background: #13635b; }
.slate { background: #1b222c; }
.wine { background: #52253a; }
.red { background: #6b2640; }
.r { height: 15px; padding: 0 8px; position: relative; display: flex; align-items: center; }
.out { justify-content: flex-end; padding-right: 9px; }
.f { height: 15px; line-height: 13px; margin-left: 7px; margin-right: 7px; padding: 0 11px 1.5px 12px; background: #10141d; border-radius: 2px; position: relative; display: flex; align-items: center; }
.f b, .xyz b { margin-left: auto; }
.xyz { margin: 0 7px; background: #10141d; border-radius: 2px; height: 43px; padding: 0 10px 0 12px; font-size: 8.5px; }
.xyz p { display: flex; height: 14px; line-height: 14px; }
.dd { height: 15px; line-height: 13px; margin-left: 8px; margin-right: 8px; padding: 0 2px 1px 5px; background: #050709; border-radius: 2px; display: flex; align-items: center; }
.sm { height: 14px; line-height: 12px; }
.dd svg { width: 7px; height: 7px; margin-left: auto; }
.dd .al { width: 10px; height: 10px; margin: 0 6px 0 -2px; }
.seg { height: 15px; margin-left: 7px; margin-right: 8px; display: flex; background: #0e1219; border: 1px solid #262d35; border-radius: 2px; line-height: 13px; }
.seg span { flex: 1; text-align: center; }
.seg .on { background: #1b344c; }
.ck u { width: 8px; height: 8px; background: #101010; margin-right: 3px; }
.split { display: flex; height: 15px; padding-right: 8px; }
.split span { width: 54px; text-align: right; }
.split .dd { flex: 1; margin: 0 0 0 7px; }
.fontrow { display: flex; height: 15px; margin-left: 8px; margin-right: 8px; background: #10141d; border-radius: 2px; }
.fontrow span { display: flex; align-items: center; justify-content: center; height: 15px; }
.fa { width: 22px; background: #050709; font: 700 13px "Liberation Serif", serif; color: #fff; }
.fa svg { width: 7px; height: 7px; }
.fb { width: 43px; background: #1a202d; color: #8b8f95; font-size: 8.5px; }
.fc { width: 16px; }
.fd { width: 14px; background: #1a2230; color: #888; }
.fe, .ff { width: 15px; }
.fd svg, .fe svg, .ff svg { width: 11px; height: 11px; }

.g { --c: #a1a1a1; } .t { --c: #00d6a3; } .sky { --c: #63a9ff; } .grn { --c: #598c5c; } .pur { --c: #6363c7; } .pink { --c: #cca6d6; }
.s { position: absolute; left: -3px; top: 5px; width: 6px; height: 6px; border-radius: 50%; background: var(--c); box-shadow: 0 0 0 .8px #0d1218; }
.f .s { left: -10px; }
.out .s { left: auto; right: -3px; }
.d, .h { border-radius: 0; transform: rotate(45deg) scale(.85); }
.s.h { border-radius: 0; background: radial-gradient(circle, #10161e 1.3px, var(--c) 1.6px); }
.s.ring { width: 8px; height: 8px; left: -4px; top: 4px; background: #333; border: 1.2px solid #888; }
.mt1 { margin-top: 1px; } .mt2 { margin-top: 2px; } .mt3 { margin-top: 3px; } .mt4 { margin-top: 4px; } .mt5 { margin-top: 5px; } .mt7 { margin-top: 7px; } .mt24 { margin-top: 24px; }

/* canvas placement of each node */
.nA { left: 553px; top: -11px; height: 97px; }
.nB { left: 715px; top: 17px; height: 70px; }
.nC { left: 877px; top: -20px; width: 141px; height: 248px; }
.nD { left: 1071px; top: 3px; height: 87px; }
.nD h4, .nH h4, .nI h4 { height: 15px; }
.nE { left: 757px; top: 273px; height: 174px; }
.nF { left: 908px; top: 274px; height: 103px; }
.nG { left: 1086px; top: 298px; height: 143px; }
.nH { left: 1384px; top: 321px; height: 50px; }
.nI { left: 1259px; top: 384px; width: 106px; height: 71px; border: 1px solid #4365b9; background: #1d2a3e; }
.nJ { left: 370px; top: 489px; height: 35px; }
.nK { left: 520px; top: 439px; height: 84px; }
.nL { left: 894px; top: 419px; height: 84px; }
.nM { left: 698px; top: 501px; height: 80px; }
```
